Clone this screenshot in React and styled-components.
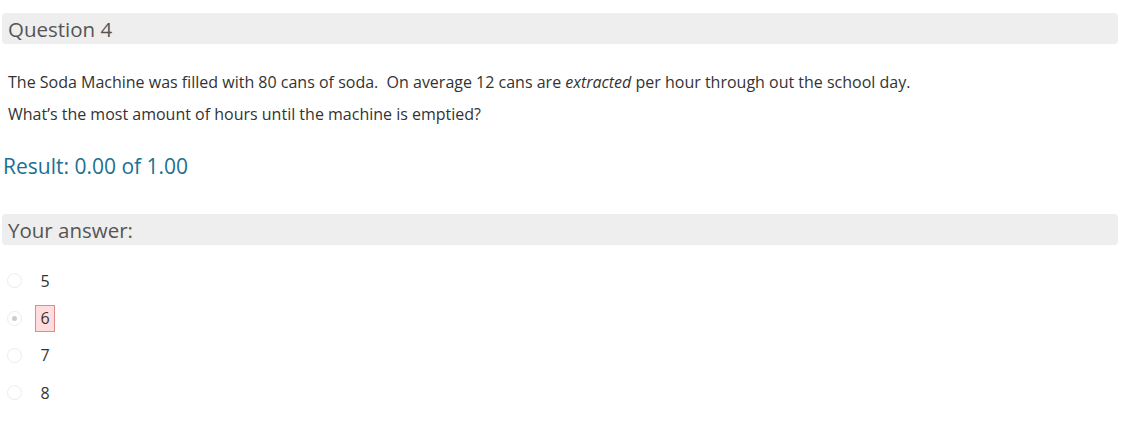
import React from 'react';
import styled, { createGlobalStyle } from 'styled-components';

const GlobalStyle = createGlobalStyle`
  body {
    margin: 0;
    background: #fff;
    font-family: "Open Sans", "Noto Sans", sans-serif;
    color: #333;
  }
`;

const Page = styled.div`
  padding: 13px 6px 0 2px;
`;

const SectionHeader = styled.div`
  background: #eee;
  border-radius: 4px;
  height: 31px;
  padding: 0 6px;
  display: flex;
  align-items: center;
  font-size: 20.5px;
  color: #555;
  margin-top: ${p => p.$top || 0}px;
`;

const Prompt = styled.div`
  padding: 22px 6px 0;
  font-size: 16px;
  line-height: 32px;
  color: #333;

  p {
    margin: 0;
  }
`;

const Result = styled.div`
  margin-top: 21px;
  padding-left: 1px;
  font-size: 21px;
  line-height: 30px;
  color: #1d6f91;
`;

const Options = styled.div`
  padding: 17px 0 0 5px;
  display: flex;
  flex-direction: column;
`;

const Option = styled.label`
  display: flex;
  align-items: center;
  height: 37.4px;
  font-size: 16px;
  color: #333;
`;

const Radio = styled.span`
  width: 15px;
  height: 15px;
  border-radius: 50%;
  border: 1px solid #ececec;
  background: #fff;
  box-sizing: border-box;
  display: flex;
  align-items: center;
  justify-content: center;
  margin-right: 13px;

  &::after {
    content: '';
    width: 5px;
    height: 5px;
    border-radius: 50%;
    background: ${p => (p.$checked ? '#ccc' : 'transparent')};
  }
`;

const Value = styled.span`
  display: inline-flex;
  align-items: center;
  justify-content: center;
  height: 27px;
  min-width: 20px;
  box-sizing: border-box;
  padding: 0 4px;
  border: 1px solid ${p => (p.$wrong ? '#e08a8a' : 'transparent')};
  background: ${p => (p.$wrong ? '#fdd' : 'transparent')};
`;

const answers = [
  { value: '5' },
  { value: '6', checked: true, wrong: true },
  { value: '7' },
  { value: '8' },
];

export default function App() {
  return (
    <Page>
      <GlobalStyle />
      <SectionHeader>Question 4</SectionHeader>
      <Prompt>
        <p>
          The Soda Machine was filled with 80 cans of soda.&nbsp; On average 12 cans are{' '}
          <em>extracted</em> per hour through out the school day.
        </p>
        <p>What’s the most amount of hours until the machine is emptied?</p>
      </Prompt>
      <Result>Result: 0.00 of 1.00</Result>
      <SectionHeader $top={33}>Your answer:</SectionHeader>
      <Options>
        {answers.map(a => (
          <Option key={a.value}>
            <Radio $checked={a.checked} />
            <Value $wrong={a.wrong}>{a.value}</Value>
          </Option>
        ))}
      </Options>
    </Page>
  );
}
